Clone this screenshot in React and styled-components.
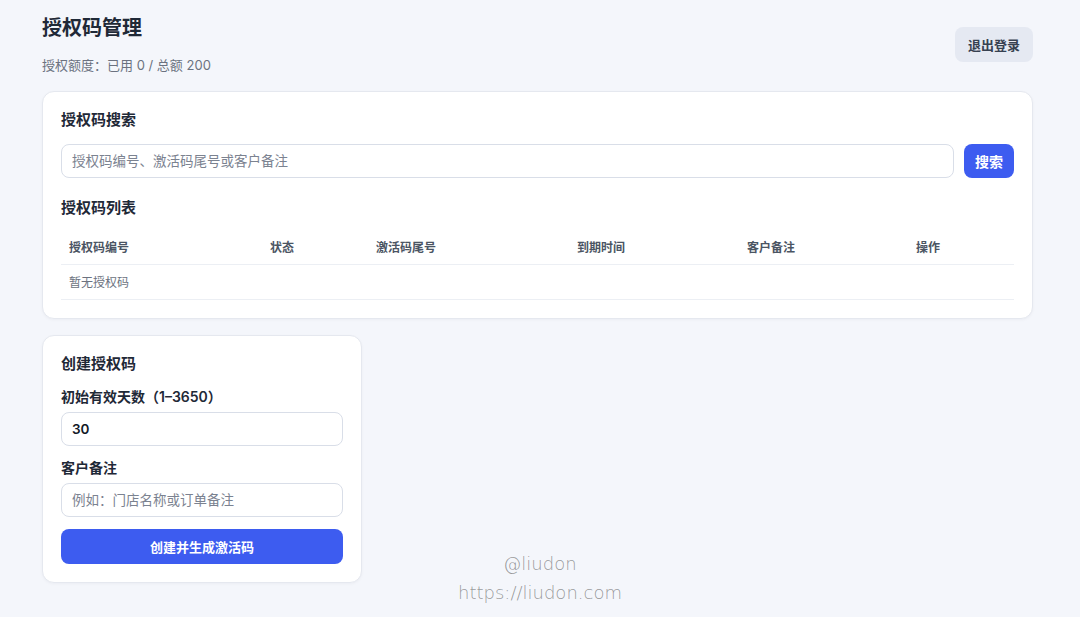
import styled, { createGlobalStyle } from 'styled-components';

const GlobalStyle = createGlobalStyle`
  * { box-sizing: border-box; }
  body {
    margin: 0;
    background: #f4f6fb;
    font-family: "Inter", "Noto Sans CJK SC", sans-serif;
    color: #1f2937;
  }
`;

const columns = [
  { title: '授权码编号', width: 201 },
  { title: '状态', width: 106 },
  { title: '激活码尾号', width: 201 },
  { title: '到期时间', width: 170 },
  { title: '客户备注', width: 169 },
  { title: '操作', width: 106 },
];

const App = () => {
  return (
    <Page>
      <GlobalStyle />
      <Header>
        <div>
          <Title>授权码管理</Title>
          <Quota>授权额度：已用 0 / 总额 200</Quota>
        </div>
        <LogoutButton>退出登录</LogoutButton>
      </Header>

      <Card>
        <CardTitle>授权码搜索</CardTitle>
        <SearchRow>
          <Input placeholder="授权码编号、激活码尾号或客户备注" />
          <PrimaryButton>搜索</PrimaryButton>
        </SearchRow>
        <CardTitle>授权码列表</CardTitle>
        <Table>
          <colgroup>
            {columns.map((c) => (
              <col key={c.title} style={{ width: c.width }} />
            ))}
          </colgroup>
          <thead>
            <tr>
              {columns.map((c) => (
                <Th key={c.title}>{c.title}</Th>
              ))}
            </tr>
          </thead>
          <tbody>
            <tr>
              <Empty colSpan={6}>暂无授权码</Empty>
            </tr>
          </tbody>
        </Table>
      </Card>

      <CreateCard>
        <CardTitle>创建授权码</CardTitle>
        <Field>
          <Label>初始有效天数（1–3650）</Label>
          <Input defaultValue="30" $strong />
        </Field>
        <Field>
          <Label>客户备注</Label>
          <Input placeholder="例如：门店名称或订单备注" />
        </Field>
        <WideButton>创建并生成激活码</WideButton>
      </CreateCard>

      <Watermark>
        <span>@liudon</span>
        <span>https://liudon.com</span>
      </Watermark>
    </Page>
  );
};

const Page = styled.div`
  position: relative;
  min-height: 617px;
  padding: 14px 47px 34px 42px;
  display: flex;
  flex-direction: column;
  gap: 16px;
`;

const Header = styled.div`
  display: flex;
  justify-content: space-between;
  align-items: center;
`;

const Title = styled.h1`
  margin: 0;
  font-size: 20px;
  line-height: 28px;
  font-weight: 700;
  color: #1f2937;
`;

const Quota = styled.div`
  margin-top: 13px;
  font-size: 13px;
  line-height: 20px;
  color: #6b7280;
`;

const LogoutButton = styled.button`
  height: 35px;
  padding: 0 13px;
  border: none;
  border-radius: 8px;
  background: #e5e9f2;
  color: #374151;
  font-family: inherit;
  font-size: 13px;
  font-weight: 700;
`;

const Card = styled.section`
  background: #fff;
  border: 1px solid #e5e8ef;
  border-radius: 12px;
  box-shadow: 0 1px 3px rgba(15, 23, 42, 0.04);
  padding: 18px;
  display: flex;
  flex-direction: column;
`;

const CreateCard = styled(Card)`
  width: 320px;
`;

const CardTitle = styled.h2`
  margin: 0 0 14px;
  font-size: 15px;
  line-height: 20px;
  font-weight: 700;
  color: #1f2937;
`;

const SearchRow = styled.div`
  display: flex;
  gap: 10px;
  margin-bottom: 20px;

  & > input {
    flex: 1;
  }
`;

const Input = styled.input`
  width: 100%;
  height: 34px;
  padding: 0 10px;
  border: 1px solid #d9dee8;
  border-radius: 8px;
  background: #fff;
  font-family: inherit;
  font-size: 13.5px;
  font-weight: ${(p) => (p.$strong ? 600 : 400)};
  color: #111827;
  outline: none;

  &::placeholder {
    color: #7b8290;
  }
`;

const PrimaryButton = styled.button`
  flex-shrink: 0;
  height: 34px;
  padding: 0 11px;
  border: none;
  border-radius: 8px;
  background: #3d5cf0;
  color: #fff;
  font-family: inherit;
  font-size: 14px;
  font-weight: 700;
`;

const WideButton = styled(PrimaryButton)`
  width: 100%;
  height: 35px;
  font-size: 13px;
`;

const Table = styled.table`
  width: 100%;
  border-collapse: collapse;
  table-layout: fixed;
  margin-top: -2px;
`;

const Th = styled.th`
  text-align: left;
  padding: 9px 8px 8px;
  font-size: 12px;
  line-height: 17px;
  font-weight: 700;
  color: #4b5563;
  border-bottom: 1px solid #eceff4;
`;

const Empty = styled.td`
  padding: 9px 8px 8px;
  font-size: 12px;
  line-height: 17px;
  color: #6b7280;
  border-bottom: 1px solid #eceff4;
`;

const Field = styled.div`
  display: flex;
  flex-direction: column;
  gap: 5px;
  margin-bottom: 12px;

  &:first-of-type {
    margin-top: -1px;
  }
`;

const Label = styled.label`
  font-size: 14px;
  line-height: 20px;
  font-weight: 600;
  color: #1f2937;
`;

const Watermark = styled.div`
  position: absolute;
  left: 0;
  right: 0;
  top: 552px;
  display: flex;
  flex-direction: column;
  align-items: center;
  gap: 5px;
  font-family: "DejaVu Sans", sans-serif;
  font-weight: 300;
  font-size: 18px;
  line-height: 24px;
  color: rgba(90, 90, 90, 0.6);
  pointer-events: none;
`;

export default App;
